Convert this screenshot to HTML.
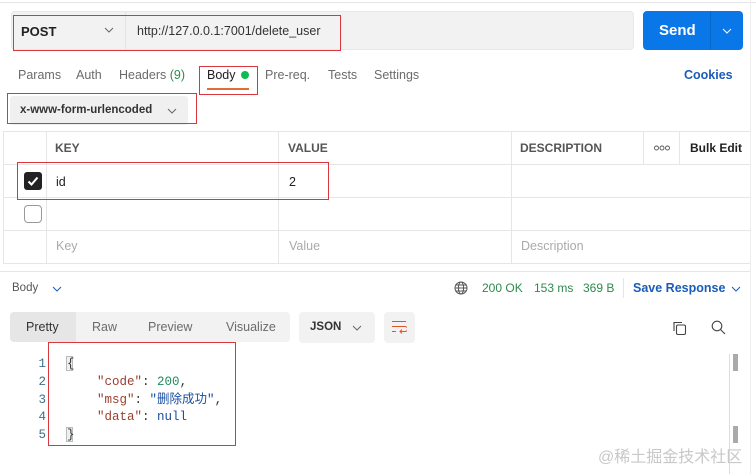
<!DOCTYPE html>
<html><head><meta charset="utf-8"><style>
*{box-sizing:border-box;margin:0;padding:0}
body{width:756px;height:474px;background:#fff;font-family:"Liberation Sans","Noto Sans CJK SC",sans-serif;position:relative;overflow:hidden;color:#212121;font-size:12px}
.a{position:absolute}
.red{position:absolute;border:1px solid #d9363e}
.hl{position:absolute;height:1px;background:#e6e6e6}
.vl{position:absolute;width:1px;background:#e6e6e6}
.g{color:#6b6b6b}
.mono{font-family:"Liberation Mono","Noto Sans CJK SC",monospace;font-size:12.5px}
</style></head><body>
<div class="hl" style="left:0;top:2px;width:756px"></div>
<div class="vl" style="left:750px;top:0;height:474px;background:#eee"></div>
<div class="a" style="left:11px;top:11px;width:623px;height:39px;background:#f2f2f2;border:1px solid #e8e8e8;border-radius:4px"></div>
<div class="vl" style="left:125px;top:12px;height:37px;background:#e2e2e2"></div>
<div class="a" style="left:21px;top:24px;font-weight:bold;font-size:13px">POST</div>
<svg class="a" style="left:104px;top:27px" width="10" height="6"><path d="M1 1l4 4 4-4" fill="none" stroke="#666" stroke-width="1"/></svg>
<div class="a" style="left:137px;top:24px;font-size:12.5px;color:#333">http://127.0.0.1:7001/delete_user</div>
<div class="red" style="left:13px;top:15px;width:328px;height:36px"></div>
<div class="a" style="left:643px;top:11px;width:100px;height:39px;background:#0a77e8;border-radius:4px"></div>
<div class="vl" style="left:710px;top:11px;height:39px;background:#0866c8"></div>
<div class="a" style="left:659px;top:22px;color:#fff;font-weight:bold;font-size:15px">Send</div>
<svg class="a" style="left:722px;top:28px" width="10" height="6"><path d="M1 1l4 4 4-4" fill="none" stroke="#fff" stroke-width="1"/></svg>
<div class="a g" style="left:18px;top:68px;font-size:12.5px">Params</div>
<div class="a g" style="left:76px;top:68px;font-size:12.5px">Auth</div>
<div class="a g" style="left:119px;top:68px;font-size:12.5px">Headers <span style="color:#2e8a4e">(9)</span></div>
<div class="a" style="left:207px;top:68px;font-size:12.5px;color:#212121">Body</div>
<div class="a" style="left:241px;top:71px;width:8px;height:8px;border-radius:50%;background:#0cbb52"></div>
<div class="a" style="left:207px;top:88px;width:42px;height:2px;background:#e36c3a"></div>
<div class="red" style="left:199px;top:66px;width:59px;height:29px"></div>
<div class="a g" style="left:265px;top:68px;font-size:12.5px">Pre-req.</div>
<div class="a g" style="left:328px;top:68px;font-size:12.5px">Tests</div>
<div class="a g" style="left:374px;top:68px;font-size:12.5px">Settings</div>
<div class="a" style="left:684px;top:68px;font-size:12.5px;color:#1b5cb8;font-weight:bold">Cookies</div>
<div class="a" style="left:10px;top:96px;width:178px;height:29px;background:#f0f0f0;border-radius:3px"></div>
<div class="a" style="left:20px;top:104px;font-weight:bold;font-size:11.5px;color:#333">x-www-form-urlencoded</div>
<svg class="a" style="left:167px;top:108px" width="10" height="6"><path d="M1 1l4 4 4-4" fill="none" stroke="#666" stroke-width="1"/></svg>
<div class="red" style="left:7px;top:93px;width:190px;height:31px"></div>
<div class="hl" style="left:3px;top:131px;width:747px"></div>
<div class="hl" style="left:3px;top:164px;width:747px"></div>
<div class="hl" style="left:3px;top:197px;width:747px"></div>
<div class="hl" style="left:3px;top:230px;width:747px"></div>
<div class="hl" style="left:3px;top:263px;width:747px"></div>
<div class="vl" style="left:3px;top:131px;height:132px"></div>
<div class="vl" style="left:46px;top:131px;height:132px"></div>
<div class="vl" style="left:278px;top:131px;height:132px"></div>
<div class="vl" style="left:511px;top:131px;height:132px"></div>
<div class="vl" style="left:643px;top:131px;height:33px"></div>
<div class="vl" style="left:679px;top:131px;height:33px"></div>
<div class="a" style="left:55px;top:141px;font-weight:bold;color:#555;font-size:12px">KEY</div>
<div class="a" style="left:288px;top:141px;font-weight:bold;color:#555;font-size:12px">VALUE</div>
<div class="a" style="left:520px;top:141px;font-weight:bold;color:#555;font-size:12px">DESCRIPTION</div>
<svg class="a" style="left:654px;top:145px" width="16" height="6" fill="none" stroke="#555" stroke-width="0.9"><circle cx="2.5" cy="3" r="2"/><circle cx="8" cy="3" r="2"/><circle cx="13.5" cy="3" r="2"/></svg>
<div class="a" style="left:690px;top:141px;font-weight:bold;color:#222;font-size:12px">Bulk Edit</div>
<div class="a" style="left:24px;top:172px;width:18px;height:18px;border-radius:3px;background:#222"></div>
<svg class="a" style="left:24px;top:172px" width="18" height="18"><path d="M4.5 9.5l3 3 6-7" fill="none" stroke="#fff" stroke-width="2"/></svg>
<div class="a" style="left:56px;top:175px;font-size:12.5px">id</div>
<div class="a" style="left:289px;top:175px;font-size:12.5px">2</div>
<div class="red" style="left:17px;top:162px;width:312px;height:38px"></div>
<div class="a" style="left:24px;top:205px;width:18px;height:18px;border-radius:4px;border:1px solid #999;background:#fff"></div>
<div class="a" style="left:56px;top:239px;font-size:12.5px;color:#aaa">Key</div>
<div class="a" style="left:289px;top:239px;font-size:12.5px;color:#aaa">Value</div>
<div class="a" style="left:521px;top:239px;font-size:12.5px;color:#aaa">Description</div>
<div class="hl" style="left:0;top:271px;width:750px"></div>
<div class="a" style="left:12px;top:282px;font-size:11.5px;color:#555">Body</div>
<svg class="a" style="left:52px;top:286px" width="10" height="6"><path d="M1 1l4 4 4-4" fill="none" stroke="#1b5cb8" stroke-width="1"/></svg>
<svg class="a" style="left:454px;top:281px" width="14" height="14" fill="none" stroke="#555" stroke-width="1"><circle cx="7" cy="7" r="6"/><ellipse cx="7" cy="7" rx="2.6" ry="6"/><path d="M1 7h12M2 4h10M2 10h10"/></svg>
<div class="a" style="left:482px;top:281px;font-size:12px;color:#2e8a4e">200 OK</div>
<div class="a" style="left:534px;top:281px;font-size:12px;color:#2e8a4e">153 ms</div>
<div class="a" style="left:583px;top:281px;font-size:12px;color:#2e8a4e">369 B</div>
<div class="vl" style="left:623px;top:278px;height:20px"></div>
<div class="a" style="left:633px;top:281px;font-size:12.5px;color:#1b5cb8;font-weight:bold">Save Response</div>
<svg class="a" style="left:731px;top:286px" width="10" height="6"><path d="M1 1l4 4 4-4" fill="none" stroke="#1b5cb8" stroke-width="1"/></svg>
<div class="a" style="left:10px;top:312px;width:280px;height:30px;background:#f2f2f2;border-radius:4px"></div>
<div class="a" style="left:10px;top:312px;width:66px;height:30px;background:#e6e6e6;border-radius:4px 0 0 4px"></div>
<div class="a" style="left:26px;top:320px;font-size:12.5px;color:#333">Pretty</div>
<div class="a" style="left:92px;top:320px;font-size:12.5px;color:#6b6b6b">Raw</div>
<div class="a" style="left:148px;top:320px;font-size:12.5px;color:#6b6b6b">Preview</div>
<div class="a" style="left:226px;top:320px;font-size:12.5px;color:#6b6b6b">Visualize</div>
<div class="a" style="left:299px;top:312px;width:76px;height:31px;background:#f2f2f2;border-radius:4px"></div>
<div class="a" style="left:310px;top:321px;font-size:11.5px;font-weight:bold;color:#333">JSON</div>
<svg class="a" style="left:352px;top:325px" width="10" height="6"><path d="M1 1l4 4 4-4" fill="none" stroke="#666" stroke-width="1"/></svg>
<div class="a" style="left:384px;top:312px;width:31px;height:31px;background:#f2f2f2;border-radius:4px"></div>
<svg class="a" style="left:391px;top:320px" width="16" height="14" fill="none" stroke="#e0542a" stroke-width="1"><path d="M1 1.5h14M1 6.5h13a2.5 2.5 0 0 1 0 5H9M11 9.5l-2 2 2 2M1 11.5h4"/></svg>
<svg class="a" style="left:671px;top:320px" width="16" height="16" fill="none" stroke="#444" stroke-width="1.1"><path d="M3 11V2.5h8"/><rect x="5.5" y="5" width="9" height="9.5" rx="1.5"/></svg>
<svg class="a" style="left:711px;top:320px" width="15" height="15" fill="none" stroke="#444" stroke-width="1.1"><circle cx="6" cy="6" r="4.8"/><path d="M9.5 9.5l4.5 4.5"/></svg>
<div class="vl" style="left:729px;top:354px;height:120px;background:#ddd"></div>
<div class="a" style="left:733px;top:354px;width:5px;height:17px;background:#aaa"></div>
<div class="a" style="left:733px;top:426px;width:5px;height:17px;background:#aaa"></div>
<div class="mono a" style="left:36px;top:356px;line-height:17.8px;color:#3b6e8f;text-align:right;width:10px">1<br>2<br>3<br>4<br>5</div>
<div class="a" style="left:66px;top:356px;width:7px;height:15px;border:1px solid #bbb;background:#e9f3e9"></div>
<div class="a" style="left:66px;top:427px;width:7px;height:15px;border:1px solid #bbb;background:#e9f3e9"></div>
<div class="mono a" style="left:67px;top:356px;line-height:17.8px;white-space:pre;color:#333">{
    <span style="color:#9c3d2c">"code"</span>: <span style="color:#218a5a">200</span>,
    <span style="color:#9c3d2c">"msg"</span>: <span style="color:#1b4fa0">"删除成功"</span>,
    <span style="color:#9c3d2c">"data"</span>: <span style="color:#1b4fa0">null</span>
}</div>
<div class="red" style="left:48px;top:342px;width:188px;height:104px"></div>
<div class="a" style="left:598px;top:443px;font-size:16px;color:#c8c8c8">@稀土掘金技术社区</div>
</body></html>
